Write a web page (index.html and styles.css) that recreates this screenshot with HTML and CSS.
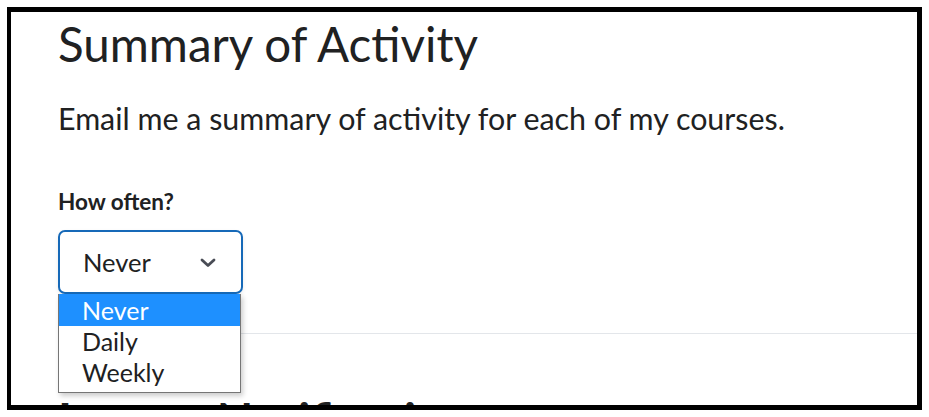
FILE: index.html
```html
<!DOCTYPE html>
<html>
<head>
<meta charset="utf-8">
<link rel="stylesheet" href="styles.css">
</head>
<body>
<div class="frame">
  <div class="content">
    <h1 class="title">Summary of Activity</h1>
    <p class="desc">Email me a summary of activity for each of my courses.</p>
    <div class="field">
      <div class="label">How often?</div>
      <div class="select-wrap">
        <div class="select">
          <span class="select-value">Never</span>
          <svg class="chev" width="18" height="11" viewBox="0 0 18 11"><path d="M3 3 L9 8.5 L15 3" fill="none" stroke="#494c55" stroke-width="2.8" stroke-linecap="round" stroke-linejoin="round"/></svg>
        </div>
        <ul class="options">
          <li class="opt opt-active">Never</li>
          <li class="opt">Daily</li>
          <li class="opt">Weekly</li>
        </ul>
      </div>
    </div>
    <hr class="divider">
    <h2 class="next-title">Instant Notifications</h2>
  </div>
</div>
</body>
</html>
```
FILE: styles.css
```css
html, body {
  margin: 0;
  padding: 0;
  background: #ffffff;
}
body {
  padding: 7px 0 0 7px;
  font-family: Lato, "Noto Sans", sans-serif;
  color: #202122;
}
.frame {
  box-sizing: border-box;
  width: 915px;
  height: 403px;
  border: 5px solid #000;
  border-left-width: 4px;
  overflow: hidden;
  background: #fff;
}
.content {
  padding: 3px 0 0 47px;
}
.title {
  margin: 0;
  font-size: 47.5px;
  font-weight: 400;
  line-height: 57px;
  color: #202122;
}
.desc {
  margin: 28px 0 0;
  font-size: 30.4px;
  line-height: 36px;
  color: #202122;
}
.field {
  margin-top: 52px;
}
.label {
  font-size: 22.5px;
  font-weight: 700;
  line-height: 27px;
  color: #202122;
}
.select-wrap {
  position: relative;
  margin-top: 15px;
  width: 185px;
}
.select {
  box-sizing: border-box;
  height: 64px;
  border: 2px solid #1669b8;
  border-radius: 7px;
  display: flex;
  align-items: center;
  justify-content: space-between;
  padding: 0 24px 0 23px;
  background: #fff;
  box-shadow: 0 2px 4px rgba(0,0,0,0.08);
}
.select-value {
  font-size: 25.5px;
  color: #202122;
}
.chev {
  display: block;
}
.options {
  position: absolute;
  left: 0;
  top: 64px;
  width: 183px;
  margin: 0;
  padding: 0 0 4px;
  list-style: none;
  background: #fff;
  border: 1px solid #767676;
  border-top: none;
  box-sizing: border-box;
  box-shadow: 2px 3px 5px rgba(0,0,0,0.2);
  z-index: 2;
}
.opt {
  font-size: 25px;
  line-height: 31px;
  padding-left: 23px;
  color: #202122;
}
.opt-active {
  background: #1e90ff;
  color: #fff;
  line-height: 32px;
}
.divider {
  margin: 39px 0 0 0;
  border: none;
  border-top: 1.5px solid #e3e6ea;
}
.next-title {
  margin: 57px 0 0;
  font-size: 47.5px;
  font-weight: 700;
  line-height: 57px;
  color: #202122;
}
```
